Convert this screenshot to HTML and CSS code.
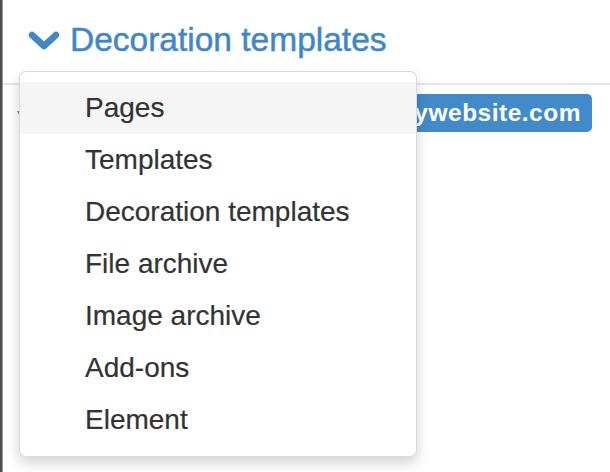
FILE: index.html
```html
<!DOCTYPE html>
<html lang="en">
<head>
    <meta charset="UTF-8">
    <title>Decoration templates</title>
    <link rel="stylesheet" href="styles.css">
</head>
<body>
    <div class="frame">
        <div class="edge"></div>
        <div class="main">
            <div class="header">
                <button class="switcher">
                    <svg class="chevron" width="32" height="20" viewBox="0 0 32 20">
                        <path d="M4 4 L16 15 L28 4" fill="none" stroke="#3f87c7" stroke-width="6.5" stroke-linecap="round" stroke-linejoin="round"/>
                    </svg>
                    <span>Decoration templates</span>
                </button>
            </div>
            <div class="row">
                <span class="caret">&#9662;</span>
                <span class="badge">www.mywebsite.com</span>
            </div>

            <ul class="menu">
                <li class="active">Pages</li>
                <li>Templates</li>
                <li>Decoration templates</li>
                <li>File archive</li>
                <li>Image archive</li>
                <li>Add-ons</li>
                <li>Element</li>
            </ul>
        </div>
    </div>
</body>
</html>
```

FILE: styles.css
```css
body {
    margin: 0;
    background: #fff;
    font-family: 'Liberation Sans', Arial, sans-serif;
    color: #333;
    overflow: hidden;
}

.frame {
    display: flex;
    height: 472px;
}

.edge {
    width: 2px;
    background: #4d4d4d;
    border-right: 1px solid #9a9a9a;
}

.main {
    flex: 1;
    position: relative;
}

.header {
    height: 83px;
    border-bottom: 2px solid #e6e6e6;
    padding-left: 25px;
    display: flex;
    align-items: flex-start;
}

.switcher {
    border: none;
    background: none;
    padding: 0;
    margin-top: 21px;
    display: flex;
    align-items: center;
    gap: 10px;
    font-family: inherit;
    font-size: 33.5px;
    color: #3f87c7;
    -webkit-text-stroke: 0.5px #3f87c7;
    cursor: pointer;
}

.chevron {
    display: block;
    margin-top: 1px;
}

.row {
    display: flex;
    justify-content: space-between;
    align-items: center;
    padding: 9px 18px 0 14px;
}

.caret {
    color: #888;
    font-size: 14px;
}

.badge {
    background: #428bca;
    color: #fff;
    font-weight: bold;
    font-size: 24.5px;
    line-height: 38px;
    padding: 0 11px;
    border-radius: 5px;
    letter-spacing: 0.5px;
}

/* Dropdown */
.menu {
    list-style: none;
    margin: 0;
    padding: 10px 0;
    position: absolute;
    top: 71px;
    left: 16px;
    width: 396px;
    background: #fff;
    border: 1px solid rgba(0, 0, 0, 0.14);
    border-radius: 7px;
    box-shadow: 0 6px 14px rgba(0, 0, 0, 0.18);
}

.menu li {
    height: 52px;
    line-height: 52px;
    padding-left: 65px;
    font-size: 28px;
    color: #333;
    -webkit-text-stroke: 0.2px #333;
}

.menu li.active {
    background: #f5f5f5;
}
```
